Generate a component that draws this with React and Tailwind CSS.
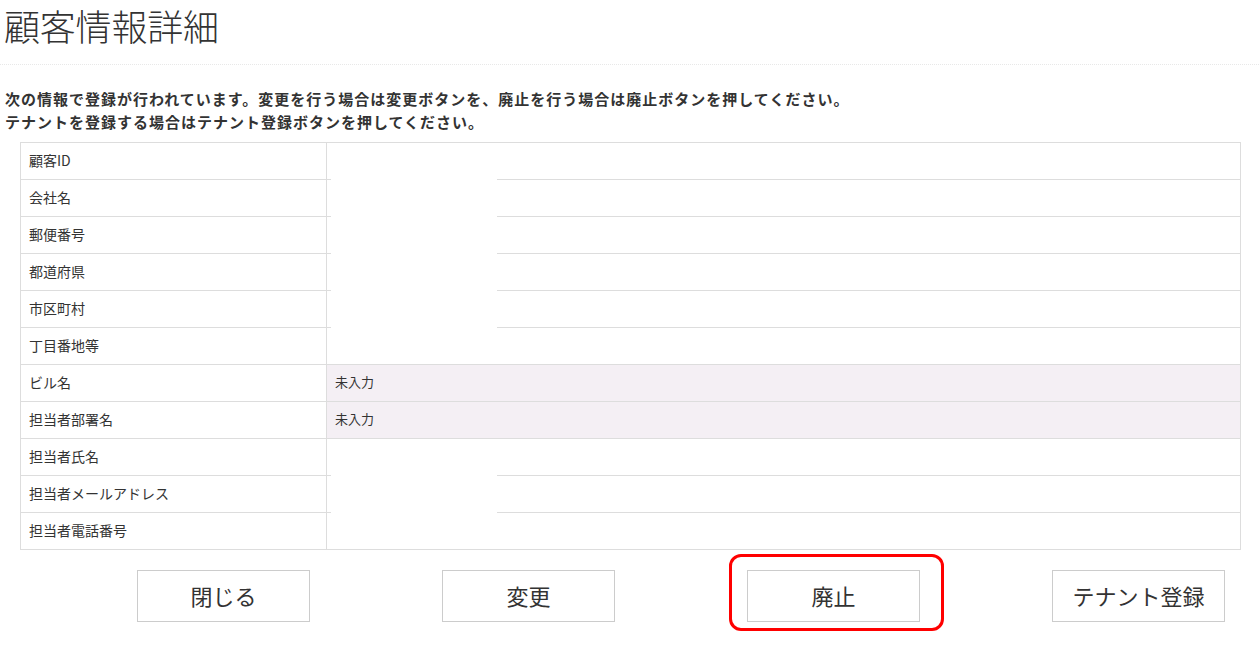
import React from 'react';

const rows = [
  { label: '顧客ID' },
  { label: '会社名' },
  { label: '郵便番号' },
  { label: '都道府県' },
  { label: '市区町村' },
  { label: '丁目番地等' },
  { label: 'ビル名', value: '未入力' },
  { label: '担当者部署名', value: '未入力' },
  { label: '担当者氏名' },
  { label: '担当者メールアドレス' },
  { label: '担当者電話番号' },
];

const font = { fontFamily: '"Noto Sans CJK JP", "Noto Sans", sans-serif' };

function ActionButton({ children }) {
  return (
    <button className="w-[173px] h-[52px] border border-[#cccccc] bg-white text-[22px] leading-[26px] pb-[2px] text-[#333333] flex items-center justify-center">
      {children}
    </button>
  );
}

export default function App() {
  return (
    <div className="w-[1259px] h-[645px] bg-white text-[#333333] overflow-hidden" style={font}>
      <h1 className="pl-[4px] pt-[1px] text-[36px] leading-[48px] font-light tracking-[-0.2px]">顧客情報詳細</h1>
      <div className="mt-[15px] border-t border-dotted border-[#e8e8e8]" />

      <p className="mt-[22px] pl-[5px] text-[15px] leading-[23px] font-bold tracking-[1px]">
        次の情報で登録が行われています。変更を行う場合は変更ボタンを、廃止を行う場合は廃止ボタンを押してください。
        <br />
        テナントを登録する場合はテナント登録ボタンを押してください。
      </p>

      <div className="relative ml-[20px] mt-[9px] w-[1221px]">
        <table className="w-full border-collapse text-[14px]">
          <tbody>
            {rows.map((r) => (
              <tr key={r.label} className="h-[37px]">
                <td className="w-[306px] border border-[#dddddd] pl-[8px] pb-[2px] align-middle">{r.label}</td>
                <td className={`border border-[#dddddd] pl-[8px] pb-[2px] text-[13px] align-middle ${r.value ? 'bg-[#f4eff4]' : ''}`}>
                  {r.value}
                </td>
              </tr>
            ))}
          </tbody>
        </table>
        <div className="absolute left-[311px] top-[2px] w-[166px] h-[217px] bg-white" />
        <div className="absolute left-[311px] top-[298px] w-[166px] h-[107px] bg-white" />
      </div>

      <div className="mt-[20px] flex pl-[137px] gap-[132px]">
        <ActionButton>閉じる</ActionButton>
        <ActionButton>変更</ActionButton>
        <div className="relative">
          <ActionButton>廃止</ActionButton>
          <div className="absolute left-[-18px] top-[-16px] w-[215px] h-[77px] rounded-[12px] border-[3px] border-[#ff0000]" />
        </div>
        <ActionButton>テナント登録</ActionButton>
      </div>
    </div>
  );
}
